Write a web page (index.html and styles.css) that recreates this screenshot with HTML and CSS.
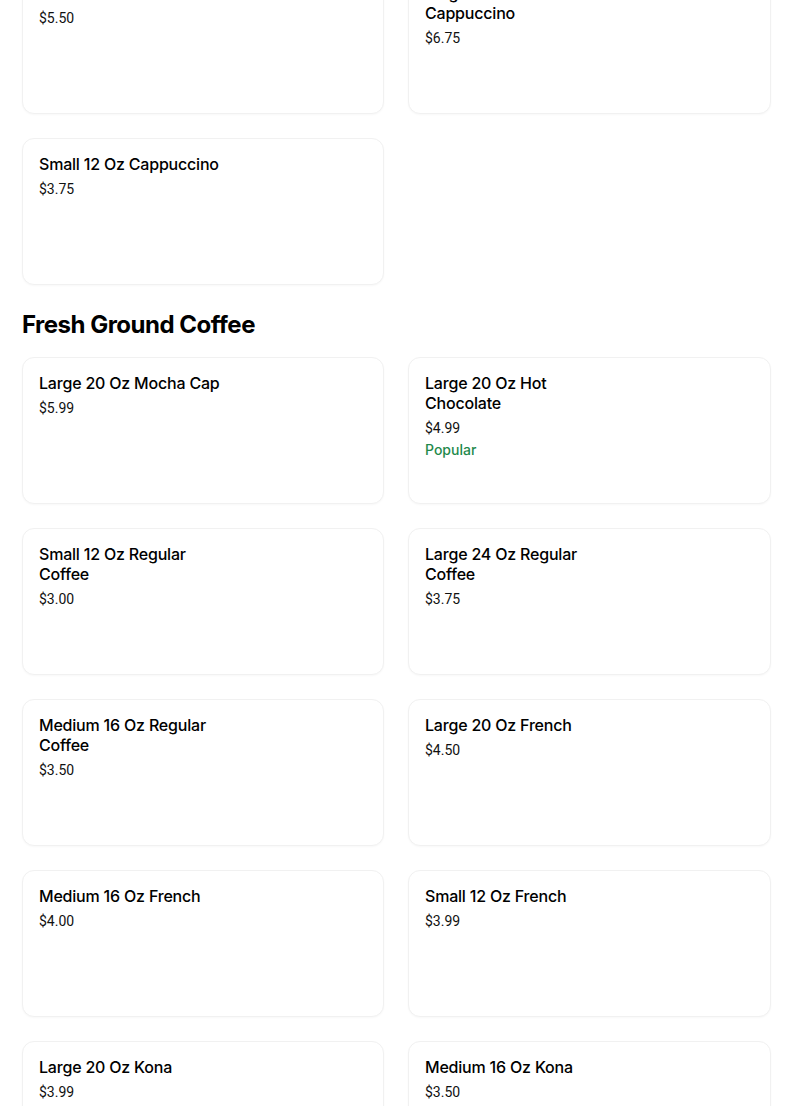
FILE: index.html
```html
<!DOCTYPE html>
<html lang="en">
<head>
<meta charset="utf-8">
<title>Menu</title>
<link rel="stylesheet" href="styles.css">
</head>
<body>
<main class="menu">
  <section class="section section-first">
    <div class="grid">
      <div class="card">
        <div class="info">
          <div class="title">Medium 16 Oz Latte</div>
          <div class="price">$5.50</div>
        </div>
      </div>
      <div class="card">
        <div class="info">
          <div class="title">Large 20 Oz Mocha Cappuccino</div>
          <div class="price">$6.75</div>
        </div>
      </div>
      <div class="card">
        <div class="info">
          <div class="title">Small 12 Oz Cappuccino</div>
          <div class="price">$3.75</div>
        </div>
      </div>
    </div>
  </section>

  <section class="section">
    <h2 class="heading">Fresh Ground Coffee</h2>
    <div class="grid">
      <div class="card">
        <div class="info">
          <div class="title">Large 20 Oz Mocha Cap</div>
          <div class="price">$5.99</div>
        </div>
      </div>
      <div class="card">
        <div class="info">
          <div class="title">Large 20 Oz Hot Chocolate</div>
          <div class="price">$4.99</div>
          <div class="tag">Popular</div>
        </div>
      </div>
      <div class="card">
        <div class="info">
          <div class="title">Small 12 Oz Regular Coffee</div>
          <div class="price">$3.00</div>
        </div>
      </div>
      <div class="card">
        <div class="info">
          <div class="title">Large 24 Oz Regular Coffee</div>
          <div class="price">$3.75</div>
        </div>
      </div>
      <div class="card">
        <div class="info">
          <div class="title">Medium 16 Oz Regular Coffee</div>
          <div class="price">$3.50</div>
        </div>
      </div>
      <div class="card">
        <div class="info">
          <div class="title">Large 20 Oz French</div>
          <div class="price">$4.50</div>
        </div>
      </div>
      <div class="card">
        <div class="info">
          <div class="title">Medium 16 Oz French</div>
          <div class="price">$4.00</div>
        </div>
      </div>
      <div class="card">
        <div class="info">
          <div class="title">Small 12 Oz French</div>
          <div class="price">$3.99</div>
        </div>
      </div>
      <div class="card">
        <div class="info">
          <div class="title">Large 20 Oz Kona</div>
          <div class="price">$3.99</div>
        </div>
      </div>
      <div class="card">
        <div class="info">
          <div class="title">Medium 16 Oz Kona</div>
          <div class="price">$3.50</div>
        </div>
      </div>
    </div>
  </section>
</main>
</body>
</html>
```

FILE: styles.css
```css
html, body {
  margin: 0;
  padding: 0;
  background: #ffffff;
  color: #000000;
  font-family: Inter, "Liberation Sans", Arial, sans-serif;
}

.menu {
  padding: 0 0 0 22px;
  overflow: hidden;
}

.section-first {
  margin-top: -33px;
}

.heading {
  margin: 24px 0 16px;
  font-size: 24px;
  line-height: 32px;
  font-weight: 700;
  letter-spacing: -0.5px;
}

.grid {
  display: grid;
  grid-template-columns: 362px 363px;
  column-gap: 24px;
  row-gap: 24px;
}

.card {
  box-sizing: border-box;
  height: 147px;
  border: 1px solid #f1f1f1;
  border-radius: 12px;
  box-shadow: 0 1px 2px rgba(0, 0, 0, 0.03);
  padding: 15px 16px;
  background: #fff;
}

.info {
  max-width: 192px;
}

.title {
  font-size: 16px;
  line-height: 20px;
  font-weight: 500;
  letter-spacing: -0.2px;
  color: #000;
}

.price {
  margin-top: 5px;
  font-family: Roboto, "Liberation Sans", Arial, sans-serif;
  font-size: 14px;
  line-height: 20px;
  color: #111;
}

.tag {
  margin-top: 2px;
  font-size: 14px;
  line-height: 20px;
  font-weight: 500;
  color: #1f8a4c;
}
```
